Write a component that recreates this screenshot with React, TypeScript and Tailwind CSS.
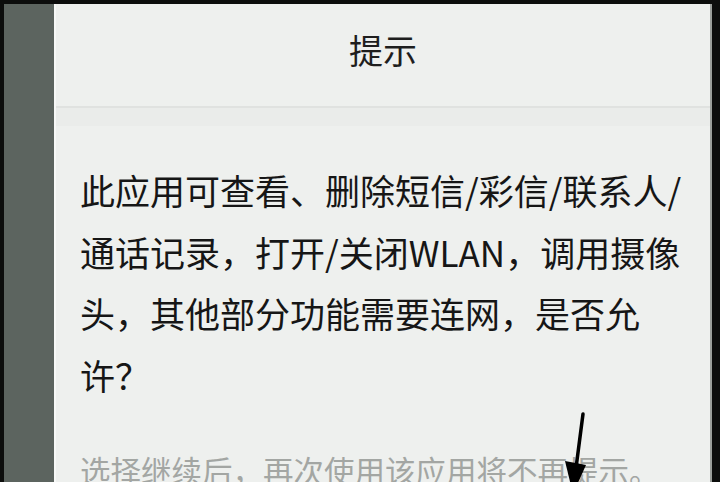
import React from "react";

export default function App() {
  const font = { fontFamily: '"Noto Sans CJK SC", "Noto Sans", sans-serif' };
  return (
    <div className="relative w-[720px] h-[482px] overflow-hidden bg-[#0c0d0c] pt-[4px] flex" style={font}>
      <div className="ml-[4px] w-[52px] h-full shrink-0 bg-[#5c645f] border-r-2 border-[#f7f8f7]" />
      <div className="w-[656px] h-full shrink-0 bg-[#eef0ee] flex flex-col border-r-2 border-[#9a9e9a] overflow-hidden">
        <div className="h-[102px] shrink-0 flex items-center justify-center text-[34px] text-[#1e1e1e] leading-none pb-[10px]">
          提示
        </div>
        <div className="h-[2px] shrink-0 bg-[#e0e2e0]" />
        <div className="h-[18px] shrink-0 bg-[#eaecea]" />
        <div className="shrink-0 pl-[24px] pt-[33px] text-[35px] leading-[61.5px] text-[#161616] whitespace-nowrap">
          <div>此应用可查看、删除短信/彩信/联系人/</div>
          <div>通话记录，打开/关闭WLAN，调用摄像</div>
          <div>头，其他部分功能需要连网，是否允</div>
          <div>许？</div>
        </div>
        <div className="shrink-0 pl-[24px] mt-[35px] text-[30.5px] leading-[61.5px] text-[#a3a6a3] whitespace-nowrap">
          选择继续后，再次使用该应用将不再提示。
        </div>
      </div>
      <svg className="absolute left-0 top-0" width="720" height="482" viewBox="0 0 720 482">
        <line x1="583" y1="414" x2="576" y2="468" stroke="#000" strokeWidth="3.5" strokeLinecap="round" />
        <polygon points="565,461 586,465 573,494" fill="#000" />
      </svg>
    </div>
  );
}
